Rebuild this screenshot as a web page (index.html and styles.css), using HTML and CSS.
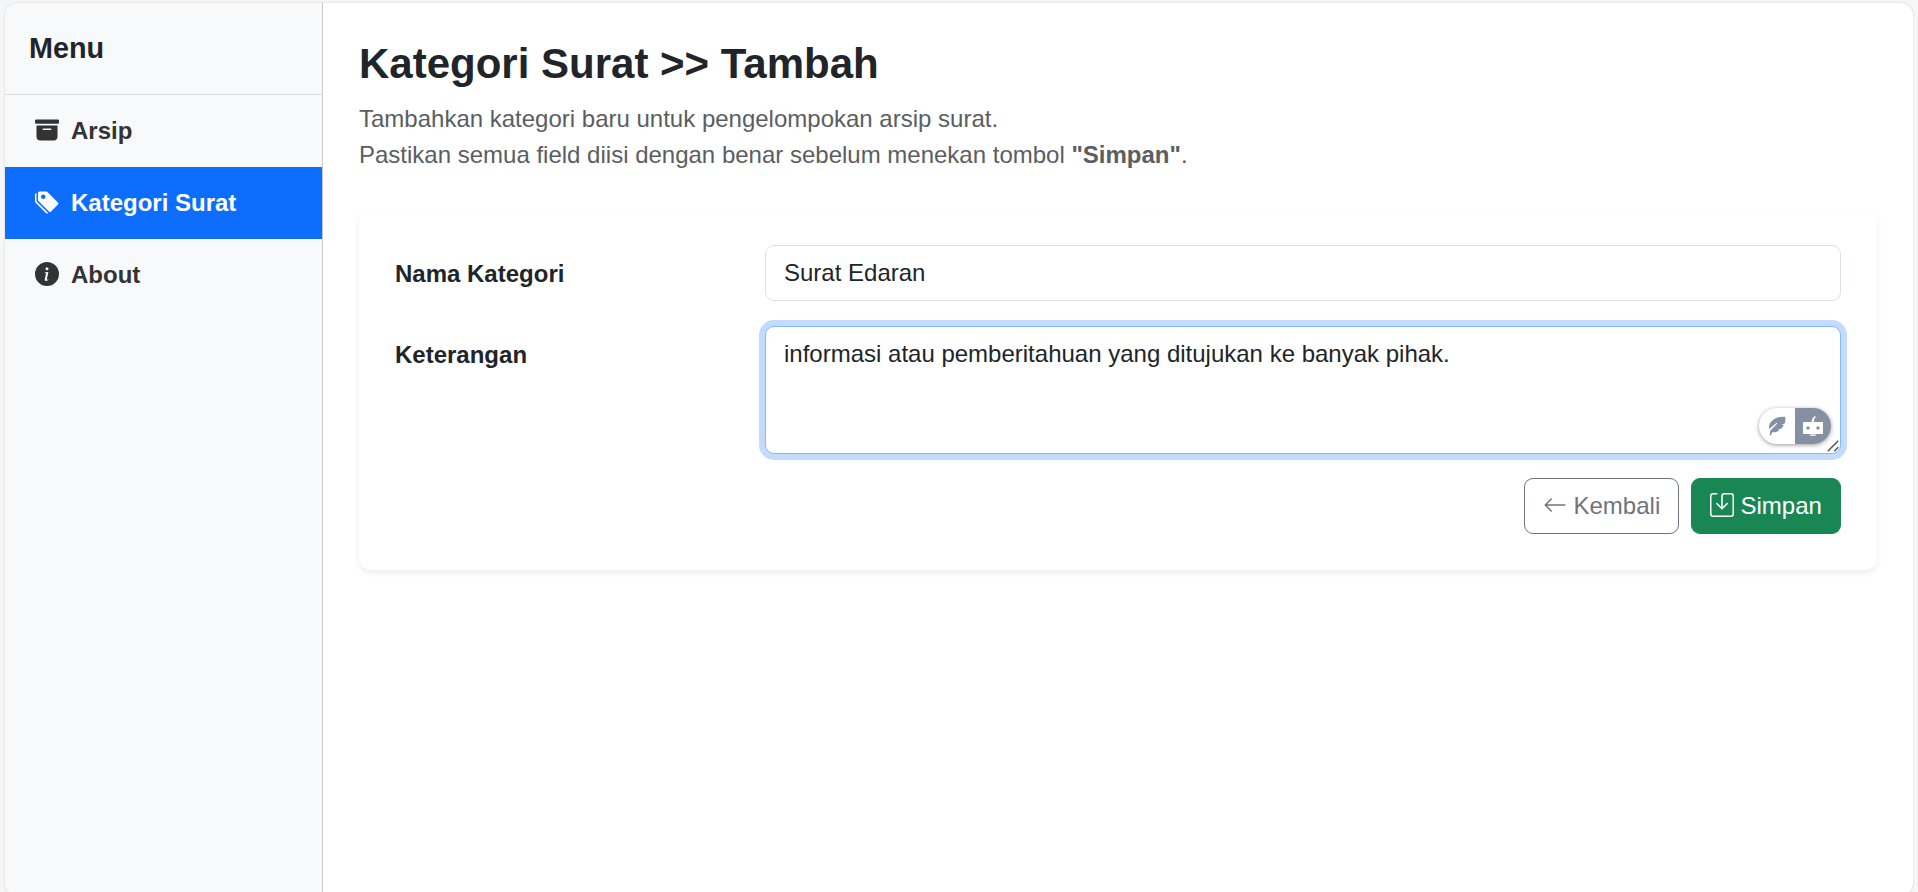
FILE: index.html
```
<!DOCTYPE html>
<html lang="id">
<head>
<meta charset="utf-8">
<title>Kategori Surat</title>
<link rel="stylesheet" href="styles.css">
</head>
<body>
<div class="app">
  <aside class="sidebar">
    <h5 class="sidebar-title">Menu</h5>
    <nav class="menu">
      <a class="menu-item"><svg class="icon" viewBox="0 0 16 16"><path d="M12.643 15C13.979 15 15 13.845 15 12.5V5H1v7.5C1 13.845 2.021 15 3.357 15zM5.5 7h5a.5.5 0 0 1 0 1h-5a.5.5 0 0 1 0-1M.8 1a.8.8 0 0 0-.8.8V3a.8.8 0 0 0 .8.8h14.4A.8.8 0 0 0 16 3V1.8a.8.8 0 0 0-.8-.8z"/></svg><span>Arsip</span></a>
      <a class="menu-item active"><svg class="icon" viewBox="0 0 16 16"><path d="M2 2a1 1 0 0 1 1-1h4.586a1 1 0 0 1 .707.293l7 7a1 1 0 0 1 0 1.414l-4.586 4.586a1 1 0 0 1-1.414 0l-7-7A1 1 0 0 1 2 6.586zm3.5 4a1.5 1.5 0 1 0 0-3 1.5 1.5 0 0 0 0 3"/><path d="M1.293 7.793A1 1 0 0 1 1 7.086V2a1 1 0 0 0-1 1v4.586a1 1 0 0 0 .293.707l7 7a1 1 0 0 0 1.414 0l.043-.043z"/></svg><span>Kategori Surat</span></a>
      <a class="menu-item"><svg class="icon" viewBox="0 0 16 16"><path d="M8 16A8 8 0 1 0 8 0a8 8 0 0 0 0 16m.93-9.412-1 4.705c-.07.34.029.533.304.533.194 0 .487-.07.686-.246l-.088.416c-.287.346-.92.598-1.465.598-.703 0-1.002-.422-.808-1.319l.738-3.468c.064-.293.006-.399-.287-.47l-.451-.081.082-.381 2.29-.287zM8 5.5a1 1 0 1 1 0-2 1 1 0 0 1 0 2"/></svg><span>About</span></a>
    </nav>
  </aside>
  <main class="content">
    <h3 class="page-title">Kategori Surat &gt;&gt; Tambah</h3>
    <p class="lead">Tambahkan kategori baru untuk pengelompokan arsip surat.<br>Pastikan semua field diisi dengan benar sebelum menekan tombol <b>"Simpan"</b>.</p>
    <form class="card">
      <div class="field">
        <label class="label" for="nama">Nama Kategori</label>
        <input class="control" id="nama" type="text" value="Surat Edaran">
      </div>
      <div class="field">
        <label class="label" for="ket">Keterangan</label>
        <div class="area-wrap">
          <textarea class="control area focused" id="ket" spellcheck="false">informasi atau pemberitahuan yang ditujukan ke banyak pihak.</textarea>
          <div class="assistant">
            <span class="assistant-half"><svg class="glyph" viewBox="0 0 20 20"><path fill="#8690a3" d="M18.200 .8C13 .3 8 1.500 5 4.700C2.500 7.400 1.600 9.500 2.300 13L9.600 6.800L10.300 7.500L3.200 14.800L2.700 19.200L3.800 19.500L5.300 16.300C8 16.600 10.500 15.900 12.400 14.300L10.400 13.600L14.200 12.700C15.300 11.700 16.200 10.500 16.800 9L14.300 8.900L17.700 7.400C18.400 5.200 18.700 3 18.200 .8Z"/></svg></span>
            <span class="assistant-half dark"><svg class="glyph" viewBox="0 0 20 20"><path fill="#fff" fill-rule="evenodd" d="M0 6H8.500L9 3.600Q9.800 1.200 12.200 0L12.900 .8Q11.200 2.500 11 4.200L10.800 6H20V18H0ZM5 10.300a1.700 1.700 0 1 0 0 3.400a1.700 1.700 0 1 0 0-3.400M15 10.300a1.700 1.700 0 1 0 0 3.400a1.700 1.700 0 1 0 0-3.400"/><path d="M6.300 18.600h7l-1 1.200h-5z" fill="#fff"/></svg></span>
          </div>
          <svg class="grip" viewBox="0 0 12 12"><path d="M.8 11.200L11.200 .8M7.300 11.200L11.200 7.300" fill="none" stroke="#555" stroke-width="1.500"/></svg>
        </div>
      </div>
      <div class="actions">
        <button type="button" class="btn btn-outline"><svg class="icon" viewBox="0 0 16 16"><path d="M15 8a.5.5 0 0 0-.5-.5H2.707l3.147-3.146a.5.5 0 1 0-.708-.708l-4 4a.5.5 0 0 0 0 .708l4 4a.5.5 0 0 0 .708-.708L2.707 8.500H14.500A.5.5 0 0 0 15 8"/></svg><span>Kembali</span></button>
        <button type="button" class="btn btn-success"><svg class="icon" viewBox="0 0 16 16"><path d="M2 1a1 1 0 0 0-1 1v12a1 1 0 0 0 1 1h12a1 1 0 0 0 1-1V2a1 1 0 0 0-1-1H9.500a1 1 0 0 0-1 1v7.293l2.646-2.647a.5.5 0 0 1 .708.708l-3.500 3.500a.5.5 0 0 1-.708 0l-3.500-3.500a.5.5 0 1 1 .708-.708L7.500 9.293V2a2 2 0 0 1 2-2H14a2 2 0 0 1 2 2v12a2 2 0 0 1-2 2H2a2 2 0 0 1-2-2V2a2 2 0 0 1 2-2h2.500a.5.5 0 0 1 0 1z"/></svg><span>Simpan</span></button>
      </div>
    </form>
  </main>
</div>
</body>
</html>
```
FILE: styles.css
```
* {
  box-sizing: border-box;
}

body {
  margin: 0;
  height: 892px;
  padding: 3px 5px 0;
  overflow: hidden;
  background: #f6f6f6;
  color: #212529;
  font: 24px/36px "Liberation Sans", Arial, sans-serif;
}

.app {
  display: flex;
  height: 892px;
  background: #fff;
  border-radius: 12px;
  overflow: hidden;
  box-shadow: 0 0 2px rgba(0, 0, 0, .2);
}

.sidebar {
  width: 318px;
  flex: none;
  background: #f8f9fb;
  border-right: 1px solid #c8c9ca;
}

.sidebar-title {
  margin: 0;
  height: 92px;
  padding: 27px 24px 0;
  border-bottom: 1px solid #dcdde3;
  font-size: 28.8px;
  font-weight: 700;
}

.menu-item {
  display: flex;
  align-items: center;
  gap: 12px;
  height: 72px;
  padding: 0 30px;
  color: #333;
  font-weight: 700;
}

.menu-item.active {
  background: #0d6efd;
  color: #fff;
}

.icon {
  width: 24px;
  height: 24px;
  flex: none;
  margin-bottom: 2px;
  fill: currentColor;
}

.content {
  flex: 1;
  padding: 36px 36px 0;
}

.page-title {
  margin: 0;
  font-size: 42px;
  line-height: 50px;
  font-weight: 700;
}

.lead {
  margin: 12px 0 0;
  padding-bottom: 36px;
  color: #5a5e62;
}

.card {
  height: 361px;
  padding: 36px;
  background: #fff;
  border-radius: 12px;
  box-shadow: 0 3px 6px rgba(0, 0, 0, .075);
}

.field {
  display: grid;
  grid-template-columns: 370px 1fr;
  margin-bottom: 25px;
}

.field + .field {
  margin-bottom: 24px;
}

.label {
  padding-top: 11px;
  font-weight: 700;
}

.control {
  display: block;
  width: 100%;
  height: 56px;
  margin: 0;
  padding: 9px 18px;
  border: 1px solid #dee2e6;
  border-radius: 9px;
  outline: 0;
  background: #fff;
  color: #212529;
  font: inherit;
}

.area-wrap {
  position: relative;
}

.area {
  height: 128px;
  resize: none;
  overflow: hidden;
}

.focused {
  border-color: #86b7fe;
  box-shadow: 0 0 0 6px #c2dbff;
}

.assistant {
  position: absolute;
  right: 10px;
  bottom: 10px;
  display: flex;
  width: 72px;
  height: 36px;
  border-radius: 18px;
  overflow: hidden;
  background: #fff;
  box-shadow: 0 1px 4px rgba(0, 0, 0, .4);
}

.assistant-half {
  display: flex;
  flex: 1;
  align-items: center;
  justify-content: center;
}

.assistant-half.dark {
  background: #8690a3;
}

.glyph {
  width: 20px;
  height: 20px;
}

.grip {
  position: absolute;
  right: 2px;
  bottom: 2px;
  width: 12px;
  height: 12px;
}

.actions {
  display: flex;
  justify-content: flex-end;
  gap: 12px;
}

.btn {
  display: flex;
  align-items: center;
  gap: 6.5px;
  height: 56px;
  padding: 0 18px;
  border: 1px solid;
  border-radius: 9px;
  font: inherit;
}

.btn-outline {
  width: 155px;
  border-color: #6c757d;
  background: #fff;
  color: #6c757d;
}

.btn-success {
  width: 150px;
  border-color: #198754;
  background: #198754;
  color: #fff;
}
```
